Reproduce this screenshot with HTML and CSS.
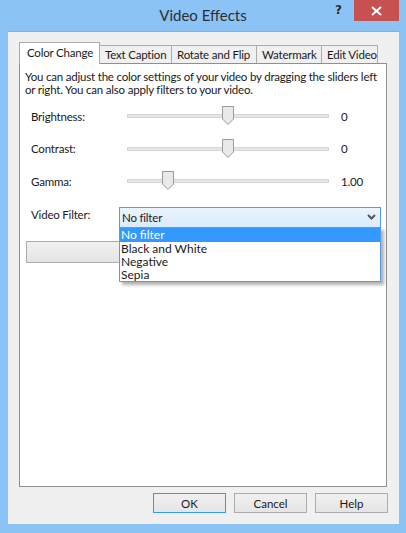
FILE: index.html
```html
<!DOCTYPE html>
<html lang="en">
<head>
    <meta charset="UTF-8">
    <title>Video Effects</title>
    <link rel="stylesheet" href="styles.css">
</head>
<body>
    <div class="window">
        <div class="titlebar">
            <div class="title">Video Effects</div>
            <div class="help-btn">?</div>
            <div class="close-btn">
                <svg width="11" height="10" viewBox="0 0 11 10"><path d="M1 1 L10 9 M10 1 L1 9" stroke="#fff" stroke-width="2"/></svg>
            </div>
        </div>

        <div class="client">
            <div class="tabs">
                <div class="tab active">Color Change</div>
                <div class="tab">Text Caption</div>
                <div class="tab">Rotate and Flip</div>
                <div class="tab">Watermark</div>
                <div class="tab">Edit Video</div>
            </div>

            <div class="panel">
                <p class="intro">You can adjust the color settings of your video by dragging the sliders left or right. You can also apply filters to your video.</p>

                <div class="setting">
                    <div class="setting-label">Brightness:</div>
                    <div class="slider">
                        <div class="track"></div>
                        <svg class="thumb" style="left: 95px" width="12" height="19" viewBox="0 0 12 19"><path d="M0.5 0.5 H11.5 V13 L6 18.5 L0.5 13 Z" fill="#e9e9e9" stroke="#9a9a9a"/></svg>
                    </div>
                    <div class="setting-value">0</div>
                </div>

                <div class="setting">
                    <div class="setting-label">Contrast:</div>
                    <div class="slider">
                        <div class="track"></div>
                        <svg class="thumb" style="left: 95px" width="12" height="19" viewBox="0 0 12 19"><path d="M0.5 0.5 H11.5 V13 L6 18.5 L0.5 13 Z" fill="#e9e9e9" stroke="#9a9a9a"/></svg>
                    </div>
                    <div class="setting-value">0</div>
                </div>

                <div class="setting">
                    <div class="setting-label">Gamma:</div>
                    <div class="slider">
                        <div class="track"></div>
                        <svg class="thumb" style="left: 35px" width="12" height="19" viewBox="0 0 12 19"><path d="M0.5 0.5 H11.5 V13 L6 18.5 L0.5 13 Z" fill="#e9e9e9" stroke="#9a9a9a"/></svg>
                    </div>
                    <div class="setting-value">1.00</div>
                </div>

                <div class="filter-row">
                    <div class="filter-label">Video Filter:</div>
                    <div class="combo-wrap">
                        <div class="combo">
                            <span>No filter</span>
                            <svg width="9" height="6" viewBox="0 0 9 6"><path d="M1 1 L4.5 4.5 L8 1" fill="none" stroke="#555" stroke-width="2"/></svg>
                        </div>
                        <div class="dropdown">
                            <div class="option selected">No filter</div>
                            <div class="option">Black and White</div>
                            <div class="option">Negative</div>
                            <div class="option">Sepia</div>
                        </div>
                    </div>
                </div>

                <div class="wide-button"></div>
            </div>

            <div class="actions">
                <button class="btn default">OK</button>
                <button class="btn">Cancel</button>
                <button class="btn">Help</button>
            </div>
        </div>
    </div>
</body>
</html>
```

FILE: styles.css
```css
* {
    margin: 0;
    padding: 0;
    box-sizing: border-box;
}

body {
    width: 406px;
    height: 533px;
    background: #8bc3f6;
    font-family: Lato, "Liberation Sans", sans-serif;
    font-size: 11.5px;
    letter-spacing: -0.2px;
    color: #1a1a1a;
    overflow: hidden;
}

.window {
    height: 533px;
    display: flex;
    flex-direction: column;
}

.titlebar {
    height: 31px;
    position: relative;
    flex-shrink: 0;
}

.title {
    text-align: center;
    font-size: 15px;
    letter-spacing: 0;
    line-height: 31px;
    color: #2e2e2e;
}

.help-btn {
    position: absolute;
    left: 335px;
    top: 3px;
    font-family: "DejaVu Sans", sans-serif;
    font-weight: bold;
    font-size: 12px;
    color: #2a2a2a;
}

.close-btn {
    position: absolute;
    left: 354px;
    top: 0;
    width: 45px;
    height: 21px;
    background: #c75050;
    display: flex;
    align-items: center;
    justify-content: center;
}

.client {
    flex: 1;
    margin: 0 7px 9px 8px;
    background: #f0f0f0;
    border-top: 1px solid #7fb0e0;
    padding: 10px 11px 0 11px;
    display: flex;
    flex-direction: column;
}

/* tab strip */
.tabs {
    display: flex;
    align-items: flex-end;
    height: 21px;
    position: relative;
    z-index: 2;
}

.tab {
    height: 18px;
    padding: 0 5px;
    border: 1px solid #acacac;
    border-left: none;
    border-bottom: none;
    background: #f0f0f0;
    line-height: 17px;
    white-space: nowrap;
}

.tab:nth-child(2) { width: 72px; }
.tab:nth-child(3) { width: 85px; }
.tab:nth-child(4) { width: 65px; }
.tab:nth-child(5) { width: 56px; }

.tab.active {
    width: 81px;
    height: 22px;
    margin-bottom: -1px;
    background: #fff;
    border-left: 1px solid #acacac;
    padding-left: 7px;
    line-height: 19px;
}

.panel {
    width: 368px;
    height: 424px;
    background: #fff;
    border: 1px solid #8f8f8f;
    padding: 6px 4px 0 5px;
    position: relative;
}

.intro {
    line-height: 13px;
    margin-bottom: 4px;
}

.setting {
    display: grid;
    grid-template-columns: 84px 202px 1fr;
    column-gap: 12px;
    align-items: center;
    height: 32.5px;
    margin-left: 6px;
}

.slider {
    position: relative;
    height: 20px;
}

.track {
    position: absolute;
    left: 0;
    right: 0;
    top: 8px;
    height: 4px;
    background: #e7e7e7;
    border: 1px solid #d6d6d6;
}

.thumb {
    position: absolute;
    top: 0;
}

.filter-row {
    display: flex;
    margin: 9px 0 0 6px;
    position: relative;
    z-index: 3;
}

.filter-label {
    width: 88px;
    padding-top: 1px;
}

.combo-wrap {
    position: relative;
    width: 262px;
}

.combo {
    height: 21px;
    border: 1px solid #569de5;
    background: linear-gradient(#eaf4fd, #d9ebfb);
    display: flex;
    align-items: center;
    justify-content: space-between;
    padding: 0 4px 0 2px;
}

.dropdown {
    position: absolute;
    left: 0;
    top: 20px;
    width: 262px;
    background: #fff;
    border: 1px solid #569de5;
    box-shadow: 3px 3px 3px rgba(0, 0, 0, 0.3);
}

.option {
    height: 13px;
    line-height: 13px;
    font-size: 12px;
    letter-spacing: 0;
    padding-left: 1px;
}

.option.selected {
    background: #3399ff;
    color: #fff;
    height: 14px;
    line-height: 14px;
}

.wide-button {
    margin: 13px 0 0 1px;
    width: 355px;
    height: 22px;
    border: 1px solid #acacac;
    background: linear-gradient(#f0f0f0, #e5e5e5);
}

.actions {
    display: flex;
    justify-content: flex-end;
    gap: 8px;
    padding: 6px 0 0 0;
}

.btn {
    width: 73px;
    height: 20px;
    border: 1px solid #acacac;
    background: linear-gradient(#f0f0f0, #e5e5e5);
    font-family: Lato, "Liberation Sans", sans-serif;
    font-size: 11.5px;
    color: #1a1a1a;
}

.btn.default {
    border-color: #3399ff;
}
```
